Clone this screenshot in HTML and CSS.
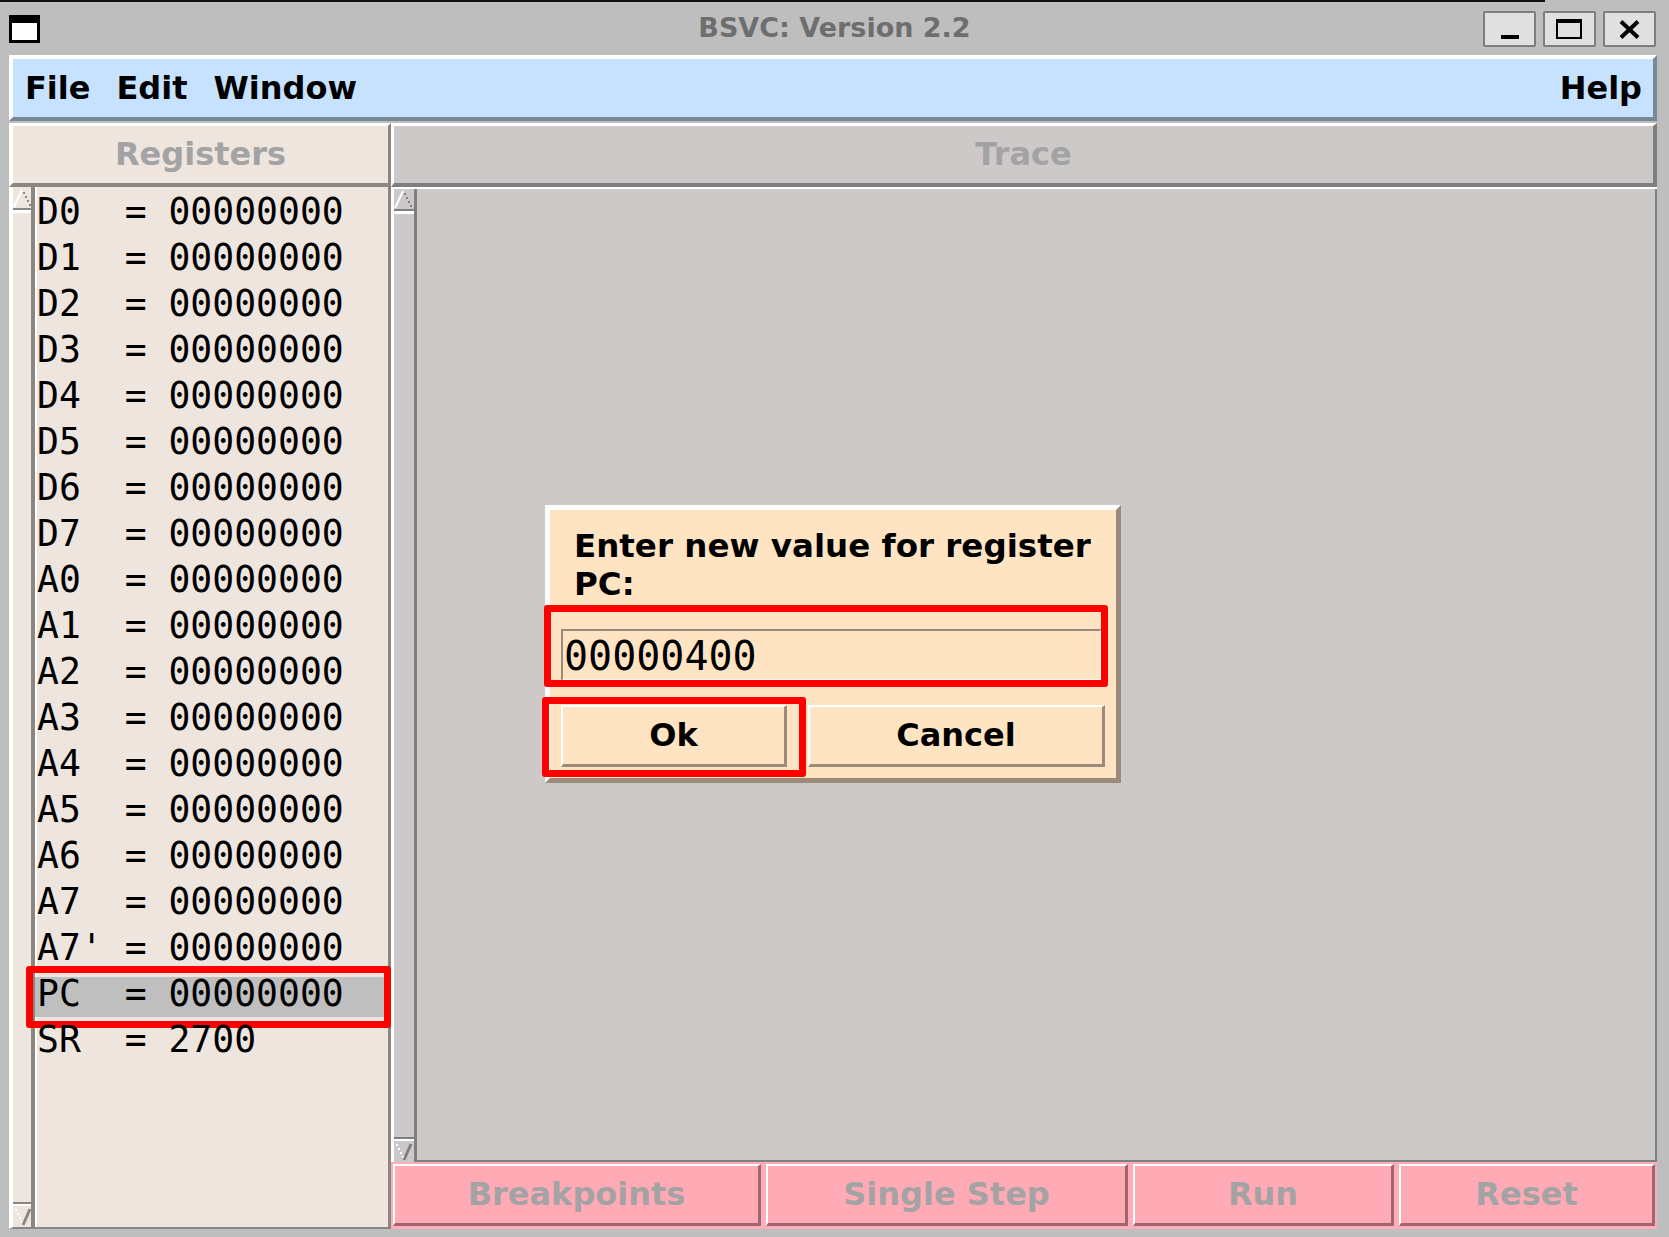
FILE: index.html
```html
<!DOCTYPE html>
<html>
<head>
    <meta charset="utf-8">
    <title>BSVC: Version 2.2</title>
    <link rel="stylesheet" href="styles.css">
</head>
<body>
    <div class="screen-top"></div>

    <!-- window manager title bar -->
    <div class="titlebar">
        <div class="win-icon"></div>
        <div class="win-title">BSVC: Version 2.2</div>
        <div class="win-buttons">
            <span class="win-btn">
                <svg width="49" height="32"><rect x="16" y="22" width="18" height="4" fill="#000"/></svg>
            </span>
            <span class="win-btn">
                <svg width="49" height="32"><rect x="11" y="6" width="26" height="20" fill="#000"/><rect x="13" y="10" width="22" height="14" fill="#e0e0e0"/></svg>
            </span>
            <span class="win-btn">
                <svg width="49" height="32"><path d="M16 8.5 L33 24.5 M33 8.5 L16 24.5" stroke="#000" stroke-width="4"/></svg>
            </span>
        </div>
    </div>

    <div class="window">
        <div class="menubar">
            <span class="menu-item">File</span>
            <span class="menu-item">Edit</span>
            <span class="menu-item">Window</span>
            <span class="menu-fill"></span>
            <span class="menu-item">Help</span>
        </div>

        <div class="main">
            <div class="col-left">
                <div class="header reg-header">Registers</div>
                <div class="reg-body">
                    <div class="scrollbar">
                        <svg class="arrow" width="18" height="25">
                            <path d="M1 19 L9 2" stroke="#fff" stroke-width="2"/>
                            <rect x="10" y="4" width="2" height="2" fill="#8b8682"/>
                            <rect x="12" y="8" width="2" height="2" fill="#8b8682"/>
                            <rect x="14" y="12" width="2" height="2" fill="#8b8682"/>
                            <rect x="16" y="16" width="2" height="2" fill="#8b8682"/>
                            <rect x="0" y="20" width="18" height="2" fill="#8b8682"/>
                            <rect x="0" y="22" width="18" height="3" fill="#fff"/>
                        </svg>
                        <svg class="arrow" width="18" height="25">
                            <rect x="0" y="0" width="18" height="2" fill="#8b8682"/>
                            <rect x="0" y="2" width="18" height="2" fill="#fff"/>
                            <rect x="2" y="7" width="2" height="2" fill="#fff"/>
                            <rect x="4" y="11" width="2" height="2" fill="#fff"/>
                            <rect x="6" y="15" width="2" height="2" fill="#fff"/>
                            <rect x="8" y="19" width="2" height="2" fill="#fff"/>
                            <path d="M17 7 L10 23" stroke="#8b8682" stroke-width="3"/>
                        </svg>
                    </div>
                    <div class="reg-list" id="regList"></div>
                </div>
            </div>

            <div class="col-right">
                <div class="header trace-header">Trace</div>
                <div class="trace-body">
                    <div class="scrollbar grey">
                        <svg class="arrow" width="20" height="25">
                            <path d="M1 19 L9 2" stroke="#fff" stroke-width="2"/>
                            <rect x="10" y="4" width="2" height="2" fill="#7f7f7f"/>
                            <rect x="12" y="8" width="2" height="2" fill="#7f7f7f"/>
                            <rect x="14" y="12" width="2" height="2" fill="#7f7f7f"/>
                            <rect x="16" y="16" width="2" height="2" fill="#7f7f7f"/>
                            <rect x="0" y="20" width="20" height="2" fill="#7f7f7f"/>
                            <rect x="0" y="22" width="20" height="3" fill="#fff"/>
                        </svg>
                        <svg class="arrow" width="20" height="25">
                            <rect x="0" y="0" width="20" height="2" fill="#7f7f7f"/>
                            <rect x="0" y="2" width="20" height="2" fill="#fff"/>
                            <rect x="2" y="7" width="2" height="2" fill="#fff"/>
                            <rect x="4" y="11" width="2" height="2" fill="#fff"/>
                            <rect x="6" y="15" width="2" height="2" fill="#fff"/>
                            <rect x="8" y="19" width="2" height="2" fill="#fff"/>
                            <path d="M17 7 L10 23" stroke="#7f7f7f" stroke-width="3"/>
                        </svg>
                    </div>
                    <div class="trace-text"></div>
                </div>
                <div class="controls">
                    <button class="ctl-btn btn-break">Breakpoints</button>
                    <button class="ctl-btn btn-step">Single Step</button>
                    <button class="ctl-btn btn-run">Run</button>
                    <button class="ctl-btn btn-reset">Reset</button>
                </div>
            </div>
        </div>
    </div>

    <!-- modal: set register value -->
    <div class="dialog">
        <div class="dlg-label">Enter new value for register PC:</div>
        <div class="dlg-entry marked">00000400</div>
        <div class="dlg-buttons">
            <button class="dlg-btn btn-ok marked">Ok</button>
            <button class="dlg-btn btn-cancel">Cancel</button>
        </div>
    </div>

    <script>
        const regs = [
            ['D0', '00000000'], ['D1', '00000000'], ['D2', '00000000'], ['D3', '00000000'],
            ['D4', '00000000'], ['D5', '00000000'], ['D6', '00000000'], ['D7', '00000000'],
            ['A0', '00000000'], ['A1', '00000000'], ['A2', '00000000'], ['A3', '00000000'],
            ['A4', '00000000'], ['A5', '00000000'], ['A6', '00000000'], ['A7', '00000000'],
            ["A7'", '00000000'], ['PC', '00000000'], ['SR', '2700']
        ];

        const list = document.getElementById('regList');
        regs.forEach(([name, value]) => {
            const row = document.createElement('div');
            row.className = 'reg';
            const line = document.createElement('span');
            line.className = 'reg-line' + (name === 'PC' ? ' selected marked' : '');
            line.textContent = name.padEnd(4, ' ') + '= ' + value;
            row.appendChild(line);
            list.appendChild(row);
        });
    </script>
</body>
</html>
```

FILE: styles.css
```css
body {
    margin: 0;
    width: 1669px;
    height: 1237px;
    overflow: hidden;
    position: relative;
    background-color: #bebebe;
    font-family: "DejaVu Sans", sans-serif;
}

.screen-top {
    height: 2px;
    width: 1545px;
    background-color: #111;
}

/* title bar */
.titlebar {
    height: 53px;
    display: grid;
    grid-template-columns: 1fr auto 1fr;
}
.win-icon {
    margin: 13px 0 0 9px;
    width: 25px;
    height: 17px;
    border: 3px solid #000;
    border-top-width: 8px;
    background-color: #fff;
}
.win-title {
    font-size: 27px;
    font-weight: bold;
    color: #6e6e6e;
    line-height: 51px;
}
.win-buttons {
    justify-self: end;
    margin: 9px 13px 0 0;
    display: flex;
    gap: 7px;
}
.win-btn {
    width: 49px;
    height: 32px;
    border: 2px solid #7e7e7e;
    border-radius: 2px;
    background-color: #e0e0e0;
}
.win-btn svg {
    display: block;
}

/* application window */
.window {
    margin-left: 9px;
    width: 1648px;
}

.menubar {
    box-sizing: border-box;
    height: 66px;
    display: flex;
    padding: 0 11px 0 12px;
    background-color: #c6e2ff;
    border-style: solid;
    border-width: 4px;
    border-color: #fff #778899 #778899 #fff;
    font-size: 32px;
    font-weight: bold;
    line-height: 58px;
    color: #000;
}
.menu-item {
    margin-right: 26px;
}
.menu-item:last-child {
    margin-right: 0;
}
.menu-fill {
    flex: 1;
}

.main {
    display: flex;
    margin-top: 2px;
    height: 1106px;
}
.col-left {
    width: 383px;
    display: flex;
    flex-direction: column;
}
.col-right {
    flex: 1;
    display: flex;
    flex-direction: column;
}

.header {
    box-sizing: border-box;
    height: 64px;
    border-style: solid;
    border-width: 3px 3px 4px 4px;
    text-align: center;
    font-size: 32px;
    font-weight: bold;
    line-height: 57px;
    color: #a3a3a3;
}
.reg-header {
    background-color: #eee5de;
    border-color: #fff #8b8682 #8b8682 #fff;
}
.trace-header {
    background-color: #cdc9c9;
    border-color: #fff #7f7f7f #7f7f7f #fff;
    border-width: 3px 4px 4px 3px;
}

/* registers list */
.reg-body {
    flex: 1;
    display: flex;
}
.scrollbar {
    box-sizing: border-box;
    width: 26px;
    display: flex;
    flex-direction: column;
    justify-content: space-between;
    padding-top: 1px;
    background-color: #eee5de;
    border-left: 4px solid #fff;
    border-right: 4px solid #8b8682;
    border-bottom: 2px solid #8b8682;
}
.scrollbar .arrow {
    display: block;
}
.reg-list {
    flex: 1;
    padding-top: 2px;
    background: linear-gradient(to right, #fff 0 2px, #eee5de 2px);
    border-right: 3px solid #8b8682;
    border-bottom: 2px solid #8b8682;
    font-family: "DejaVu Sans Mono", monospace;
    font-size: 36.4px;
    color: #000;
}
.reg {
    box-sizing: border-box;
    height: 46px;
    padding-top: 6px;
}
.reg-line {
    display: block;
    position: relative;
    margin-right: 4px;
    padding-left: 2px;
    height: 40px;
    line-height: 34px;
    white-space: pre;
}
.reg-line.selected {
    background-color: #bfbfbf;
}
.reg-line.marked::after {
    content: "";
    position: absolute;
    left: -9px;
    right: -7px;
    top: -11px;
    bottom: -11px;
    border: 7px solid #ff0000;
    border-radius: 3px;
}

/* trace pane */
.trace-body {
    flex: 1;
    display: flex;
    border-top: 2px solid #fff;
}
.scrollbar.grey {
    width: 26px;
    padding-top: 0;
    background-color: #cdc9c9;
    border-left: 3px solid #fff;
    border-right: 3px solid #7f7f7f;
    border-bottom: none;
}
.trace-text {
    flex: 1;
    background-color: #cdc9c9;
    border-right: 2px solid #7f7f7f;
    border-bottom: 2px solid #7f7f7f;
}

.controls {
    box-sizing: border-box;
    height: 67px;
    display: flex;
    gap: 5px;
    padding: 2px 2px 3px 2px;
    background-color: #ffaeb9;
}
.ctl-btn {
    box-sizing: border-box;
    height: 62px;
    padding: 0;
    background-color: #ffaab5;
    border-style: solid;
    border-width: 2px 3px 3px 2px;
    border-color: #fff #a0666e #a0666e #fff;
    font-family: "DejaVu Sans", sans-serif;
    font-size: 32px;
    font-weight: bold;
    line-height: 57px;
    color: #a3a3a3;
}
.btn-break { width: 368px; }
.btn-step { width: 362px; }
.btn-run { width: 261px; }
.btn-reset { width: 256px; }

/* dialog */
.dialog {
    position: absolute;
    left: 545px;
    top: 505px;
    box-sizing: border-box;
    width: 576px;
    height: 278px;
    padding: 17px 14px 0 11px;
    background-color: #ffe4c4;
    border-style: solid;
    border-width: 5px;
    border-color: #fff #9c8b7a #9c8b7a #fff;
    color: #000;
}
.dlg-label {
    margin-left: 13px;
    width: 525px;
    font-size: 32.5px;
    font-weight: bold;
    line-height: 38px;
}
.dlg-entry {
    position: relative;
    box-sizing: border-box;
    margin-top: 26px;
    height: 52px;
    padding: 3px 0 0 1px;
    border-style: solid;
    border-width: 2px;
    border-color: #9c8b7a #fff #fff #9c8b7a;
    font-family: "DejaVu Sans Mono", monospace;
    font-size: 40px;
    line-height: 45px;
}
.dlg-entry.marked::after {
    content: "";
    position: absolute;
    left: -19px;
    right: -8px;
    top: -26px;
    bottom: -8px;
    border: 7px solid #ff0000;
    border-radius: 3px;
}
.dlg-buttons {
    display: flex;
    gap: 21px;
    margin: 24px -3px 0 0;
}
.dlg-btn {
    position: relative;
    box-sizing: border-box;
    height: 62px;
    padding: 0;
    background-color: #ffe4c4;
    border-style: solid;
    border-width: 2px 3px 3px 2px;
    border-color: #fff #9c8b7a #9c8b7a #fff;
    font-family: "DejaVu Sans", sans-serif;
    font-size: 32px;
    font-weight: bold;
    line-height: 57px;
    color: #000;
}
.btn-ok {
    width: 226px;
}
.btn-cancel {
    flex: 1;
}
.btn-ok.marked::after {
    content: "";
    position: absolute;
    left: -21px;
    right: -22px;
    top: -10px;
    bottom: -13px;
    border: 7px solid #ff0000;
    border-radius: 3px;
}
```
